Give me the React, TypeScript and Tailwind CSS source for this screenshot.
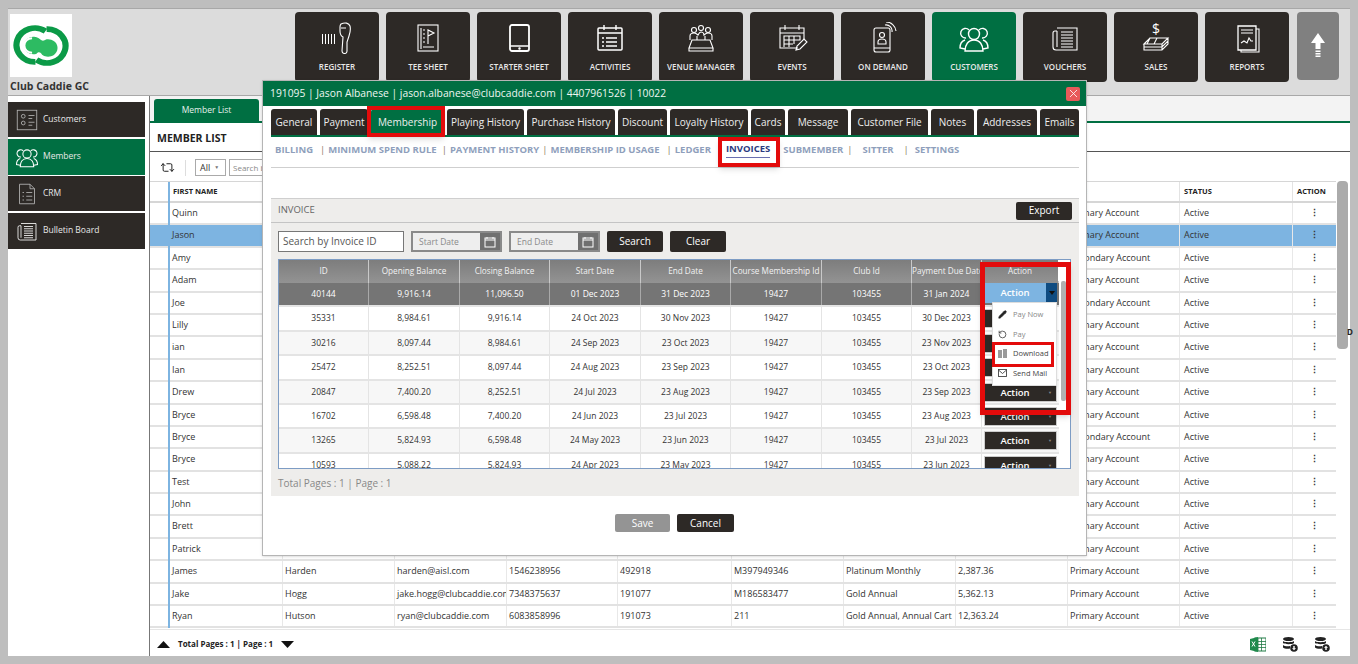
import { Pencil, RotateCcw, Repeat2, X } from 'lucide-react'
import type { ReactNode } from 'react'

const font = "font-['Open_Sans',sans-serif]"

function Ico({ children, size = 32, view = 32, color = 'white' }: { children: ReactNode; size?: number; view?: number; color?: string }) {
  return (
    <svg width={size} height={size} viewBox={`0 0 ${view} ${view}`} fill="none" stroke={color} strokeWidth="1.1">
      {children}
    </svg>
  )
}

const UsersIco = ({ size = 32 }: { size?: number }) => (
  <Ico size={size}>
    <g strokeWidth="1.400">
      <circle cx="16" cy="12" r="5.500" />
      <path d="M11 8a4.800 4.800 0 1 0-3 8M21 8a4.800 4.800 0 1 1 3 8" />
      <path d="M7 18c-3 1-5 4-5 8l5 1M25 18c3 1 5 4 5 8l-5 1M7 29c0-6 3-11 9-11s9 5 9 11z" />
    </g>
  </Ico>
)

const PaperIco = ({ size = 32 }: { size?: number }) => (
  <Ico size={size}>
    <path d="M8 6h20v22H7a3 3 0 0 1-3-3V11a2 2 0 0 1 2-2h2M8 9v16" />
    <path d="M12 10h12M12 13h12M12 16h12M12 19h12M12 22h12M12 25h12" />
  </Ico>
)

const navItems: { label: string; active?: boolean; icon: ReactNode }[] = [
  {
    label: 'REGISTER',
    icon: (
      <Ico>
        <path d="M20 2c4-2 8-1 9 2 1 4 0 7-1 10l-2 6v9a2.500 2.500 0 0 1-5 0l1-14c-2-1-3-3-3-6V5c0-1 0-2 1-3zM20 6h5" />
        <path d="M1.500 12v10M4.500 12v10M7.500 12v10M10.500 12v10M13.500 12v10" strokeWidth="1" />
      </Ico>
    ),
  },
  {
    label: 'TEE SHEET',
    icon: (
      <Ico>
        <rect x="6" y="3" width="20" height="26" />
        <path d="M16 22V8l6 3-6 3M11 8h2M11 12h2M11 16h2M11 20h2M11 25h11M9 6v21" />
      </Ico>
    ),
  },
  {
    label: 'STARTER SHEET',
    icon: (
      <Ico>
        <rect x="7" y="3" width="19" height="26" rx="2" strokeWidth="1.800" />
        <path d="M7 24h19" strokeWidth="1.500" />
        <circle cx="16.500" cy="26.500" r="0.700" fill="white" />
      </Ico>
    ),
  },
  {
    label: 'ACTIVITIES',
    icon: (
      <Ico>
        <rect x="4" y="6" width="24" height="22" rx="1" strokeWidth="1.500" />
        <path d="M4 11h24M10 3v5M22 3v5M12 16h11M12 20h11M12 24h11M8 16h2M8 20h2M8 24h2" strokeWidth="1.400" />
      </Ico>
    ),
  },
  {
    label: 'VENUE MANAGER',
    icon: (
      <Ico>
        <circle cx="9" cy="8" r="2.500" />
        <circle cx="16" cy="6" r="2.500" />
        <circle cx="23" cy="8" r="2.500" />
        <path d="M5 18v-4c0-2 2-3 4-3s3 1 4 2c1-2 2-3 3-3s3 1 3 3c1-1 2-2 4-2s4 1 4 3v4M7 18h18l3 8H4zM4 26v3h24v-3M12 14v4M20 14v4" />
      </Ico>
    ),
  },
  {
    label: 'EVENTS',
    icon: (
      <Ico>
        <path d="M22 26H4V6h24v11M4 11h24M9 3v5M23 3v5" />
        <path d="M8 14h16v4H8zM8 18v7M13 14v11M18 14v8M8 22h9" />
        <path d="M20 28l1-4 7-7 3 3-7 7z" />
      </Ico>
    ),
  },
  {
    label: 'ON DEMAND',
    icon: (
      <Ico>
        <rect x="7" y="6" width="16" height="24" rx="2" />
        <path d="M7 26h16M18 3a6 6 0 0 1 7 7M19 0a10 10 0 0 1 10 9" />
        <circle cx="15" cy="13" r="2.500" />
        <path d="M11 22v-2c0-2 2-3 4-3s4 1 4 3v2z" />
      </Ico>
    ),
  },
  { label: 'CUSTOMERS', active: true, icon: <UsersIco /> },
  { label: 'VOUCHERS', icon: <PaperIco /> },
  {
    label: 'SALES',
    icon: (
      <Ico>
        <path d="M4 22l6-6h18l-6 6zM4 22v3h18l6-6v-3M4 25v3h18l6-6v-3M10 16l-3 6M17 16l-3 6M22 22v6" />
        <text x="16" y="12" fontSize="14" fill="white" stroke="none" textAnchor="middle" fontFamily="Open Sans">$</text>
      </Ico>
    ),
  },
  {
    label: 'REPORTS',
    icon: (
      <Ico>
        <path d="M7 4h18v24H7z" strokeWidth="1.300" />
        <path d="M25 7h3v23H10v-2M10 8h12M10 11h12M10 21l3-2 3 2 2-5 2 3h2" />
      </Ico>
    ),
  },
]

const sideItems: { label: string; active?: boolean; h: string; icon: ReactNode }[] = [
  {
    label: 'Customers',
    h: 'h-[35px]',
    icon: (
      <Ico size={24}>
        <rect x="3" y="3" width="26" height="26" stroke="#b9b9b9" />
        <circle cx="11" cy="11" r="2.500" stroke="#b9b9b9" />
        <circle cx="11" cy="20" r="2.500" stroke="#b9b9b9" />
        <path d="M18 10h8M18 14h5M18 19h8M18 23h5" stroke="#b9b9b9" />
      </Ico>
    ),
  },
  { label: 'Members', active: true, h: 'h-[36px]', icon: <UsersIco size={24} /> },
  {
    label: 'CRM',
    h: 'h-[35px]',
    icon: (
      <Ico size={24}>
        <path d="M6 3h14l6 6v20H6zM20 3v6h6M10 14h2M15 14h8M10 19h2M15 19h8M10 24h2M15 24h8" stroke="#b9b9b9" />
      </Ico>
    ),
  },
  { label: 'Bulletin Board', h: 'h-[36px]', icon: <PaperIco size={24} /> },
]

type Member = { first: string; last?: string; email?: string; phone?: string; id?: string; card?: string; plan?: string; bal?: string; acct: string }

const members: Member[] = [
  { first: 'Quinn', acct: 'Primary Account' },
  { first: 'Jason', acct: 'Primary Account' },
  { first: 'Amy', acct: 'Secondary Account' },
  { first: 'Adam', acct: 'Primary Account' },
  { first: 'Joe', acct: 'Secondary Account' },
  { first: 'Lilly', acct: 'Primary Account' },
  { first: 'ian', acct: 'Primary Account' },
  { first: 'Ian', acct: 'Primary Account' },
  { first: 'Drew', acct: 'Primary Account' },
  { first: 'Bryce', acct: 'Primary Account' },
  { first: 'Bryce', acct: 'Secondary Account' },
  { first: 'Bryce', acct: 'Primary Account' },
  { first: 'Test', acct: 'Primary Account' },
  { first: 'John', acct: 'Primary Account' },
  { first: 'Brett', acct: 'Primary Account' },
  { first: 'Patrick', acct: 'Primary Account' },
  { first: 'James', last: 'Harden', email: 'harden@aisl.com', phone: '1546238956', id: '492918', card: 'M397949346', plan: 'Platinum Monthly', bal: '2,387.36', acct: 'Primary Account' },
  { first: 'Jake', last: 'Hogg', email: 'jake.hogg@clubcaddie.com', phone: '7348375637', id: '191077', card: 'M186583477', plan: 'Gold Annual', bal: '5,362.13', acct: 'Primary Account' },
  { first: 'Ryan', last: 'Hutson', email: 'ryan@clubcaddie.com', phone: '6083858996', id: '191073', card: '211', plan: 'Gold Annual, Annual Cart', bal: '12,363.24', acct: 'Primary Account' },
]

const memberCols = 'grid grid-cols-[20px_112px_112px_112px_111px_114px_112px_112px_112px_112px_113px_44px]'

const modalTabs = [
  { label: 'General', w: 'w-[46px]' },
  { label: 'Payment', w: 'w-[48px]' },
  { label: 'Membership', w: 'w-[73px]', active: true },
  { label: 'Playing History', w: 'w-[77px]' },
  { label: 'Purchase History', w: 'w-[88px]' },
  { label: 'Discount', w: 'w-[49px]' },
  { label: 'Loyalty History', w: 'w-[78px]' },
  { label: 'Cards', w: 'w-[34px]' },
  { label: 'Message', w: 'w-[60px]' },
  { label: 'Customer File', w: 'w-[77px]' },
  { label: 'Notes', w: 'w-[43px]' },
  { label: 'Addresses', w: 'w-[60px]' },
  { label: 'Emails', w: 'w-[39px]' },
]

const invoices = [
  ['40144', '9,916.14', '11,096.50', '01 Dec 2023', '31 Dec 2023', '19427', '103455', '31 Jan 2024'],
  ['35331', '8,984.61', '9,916.14', '24 Oct 2023', '30 Nov 2023', '19427', '103455', '30 Dec 2023'],
  ['30216', '8,097.44', '8,984.61', '24 Sep 2023', '23 Oct 2023', '19427', '103455', '23 Nov 2023'],
  ['25472', '8,252.51', '8,097.44', '24 Aug 2023', '23 Sep 2023', '19427', '103455', '23 Oct 2023'],
  ['20847', '7,400.20', '8,252.51', '24 Jul 2023', '23 Aug 2023', '19427', '103455', '23 Sep 2023'],
  ['16702', '6,598.48', '7,400.20', '24 Jun 2023', '23 Jul 2023', '19427', '103455', '23 Aug 2023'],
  ['13265', '5,824.93', '6,598.48', '24 May 2023', '23 Jun 2023', '19427', '103455', '23 Jul 2023'],
  ['10593', '5,088.22', '5,824.93', '24 Apr 2023', '23 May 2023', '19427', '103455', '23 Jun 2023'],
]

const invoiceHead = ['ID', 'Opening Balance', 'Closing Balance', 'Start Date', 'End Date', 'Course Membership Id', 'Club Id', 'Payment Due Date', 'Action']
const invoiceCols = 'grid grid-cols-[90px_91px_90px_91px_90px_91px_90px_70px_77px]'

function Calendar() {
  return (
    <div className="flex h-full w-[20px] items-center justify-center bg-[#707070]">
      <svg width="12" height="12" viewBox="0 0 12 12" fill="none" stroke="white" strokeWidth="1">
        <rect x="1" y="2" width="10" height="9" />
        <path d="M1 4h10M3 1v2M9 1v2" />
      </svg>
    </div>
  )
}

function DateField({ label }: { label: string }) {
  return (
    <div className="flex h-[21px] w-[91px] border-2 border-[#8a8a8a] bg-[#eeeeee]">
      <span className="flex-1 pl-[6px] text-[8.500px] leading-[17px] text-[#8a8a8a]">{label}</span>
      <Calendar />
    </div>
  )
}

function DbIcon({ up }: { up?: boolean }) {
  return (
    <svg width="16" height="16" viewBox="0 0 16 16" fill="#222">
      <ellipse cx="6.500" cy="3" rx="5.500" ry="2" />
      <path d="M1 5c1 1.600 10 1.600 11 0v2c-1 1.600-10 1.600-11 0zM1 9c1 1.500 6 1.500 7 1v2.500c-2 .5-6 .3-7-1z" />
      <circle cx="12" cy="12" r="3.800" />
      <path d={up ? 'M12 9.800l2 2h-1.300v2.200h-1.400v-2.200H10z' : 'M12 14.200l2-2h-1.300V10h-1.400v2.200H10z'} fill="white" />
    </svg>
  )
}

const Pipe = ({ ml }: { ml: string }) => <span className={`font-normal text-[#8a7a5e] ${ml}`}>|</span>

export default function App() {
  return (
    <div className={`${font} relative flex h-[664px] w-[1358px] flex-col overflow-hidden bg-[#bebebe] pt-2 pr-2 pb-2 pl-2 text-[#333]`}>
      {/* Top bar */}
      <header className="flex h-[88px] shrink-0 border-t border-b border-[#a8a8a8] bg-[#dcdcdc]">
        <div className="w-[287px] shrink-0 pt-[5px] pl-[2px]">
          <div className="flex h-[63px] w-[62px] items-center justify-center bg-white">
            <svg width="58" height="41" viewBox="4 2 52 40" preserveAspectRatio="none" fill="none">
              <path d="M25 38a16.500 16.500 0 1 1 9-30" stroke="#0b9a47" strokeWidth="5.500" />
              <path d="M35 6a16.500 16.500 0 1 1-9 30" stroke="#0b9a47" strokeWidth="5.500" />
              <path d="M26 30a8.500 8.500 0 1 1 2-15c3 3 4 3 7 1a8.500 8.500 0 1 1-4 15c-2-3-3-3-5-1z" fill="#2dbb62" />
              <path d="M22 15c-4 0-7 3-7 7s3 7 7 7" stroke="#fff" strokeWidth="2" />
            </svg>
          </div>
          <div className="mt-[2px] text-[10.500px] font-bold whitespace-nowrap text-[#333]">Club Caddie GC</div>
        </div>
        <nav className="flex gap-[7px] pt-[3px]">
          {navItems.map((n) => (
            <div
              key={n.label}
              className={`flex h-[70px] w-[84px] flex-col items-center rounded-[4px] pt-[10px] ${n.active ? 'bg-[#006f42]' : 'bg-[#2d2926]'}`}
            >
              {n.icon}
              <span className="mt-[7px] text-[8px] font-semibold whitespace-nowrap text-[#e8e8e8]">{n.label}</span>
            </div>
          ))}
          <div className="ml-[1px] flex h-[68px] w-[42px] items-center justify-center rounded-[4px] bg-[#808080]">
            <svg width="14" height="26" viewBox="0 0 14 26" fill="white">
              <path d="M7 0l7 10H9.500v6h-5v-6H0zM4.500 17.500h5v1.500h-5zM4.500 20h5v1.500h-5zM4.500 22.500h5V24h-5z" />
            </svg>
          </div>
        </nav>
      </header>

      <div className="flex min-h-0 flex-1 bg-white">
        {/* Sidebar */}
        <aside className="flex w-[141px] shrink-0 flex-col gap-[1.500px] pt-[6px]">
          {sideItems.map((s) => (
            <div key={s.label} className={`flex w-[137px] items-center pl-[7px] ${s.h} ${s.active ? 'bg-[#006f42]' : 'bg-[#2d2926]'}`}>
              <div className="flex w-[28px] justify-start">{s.icon}</div>
              <span className="text-[8.500px] font-medium text-[#e8e8e8]">{s.label}</span>
            </div>
          ))}
        </aside>

        {/* Main */}
        <main className="flex w-[1201px] flex-col border-l border-[#777]">
          <div className="flex h-[27px] shrink-0 items-end border-b-2 border-[#006f42] bg-[#f3f3f3] pl-[4px]">
            <div className="flex h-[22px] w-[105px] items-center justify-center rounded-t-[3px] bg-[#006f42] text-[8.500px] text-[#e6f2ec]">Member List</div>
          </div>
          <div className="flex h-[29px] shrink-0 items-center border-b border-[#555] pt-[3px] pl-[7px] text-[10.500px] font-bold text-[#222]">MEMBER LIST</div>
          <div className="flex h-[29px] shrink-0 items-center pt-[2px] pl-[10px]">
            <Repeat2 size={15} strokeWidth={1.600} className="text-[#222]" />
            <div className="ml-[10px] h-[16px] w-px bg-[#ddd]" />
            <div className="ml-[9px] flex h-[17px] w-[31px] items-center gap-[4px] border border-[#aaa] pl-[4px] text-[9px]">
              All <span className="text-[5px] text-[#777]">▼</span>
            </div>
            <div className="ml-[3px] h-[17px] w-[60px] border border-[#aaa] pl-[3px] text-[8px] leading-[15px] text-[#888]">Search by</div>
          </div>

          <div className="flex min-h-0 flex-1">
            <div className="w-[1186px] shrink-0 overflow-hidden">
              <div className={`${memberCols} h-[22px] border-t border-b-2 border-[#d6d6d6] text-[7.500px] leading-[18px] font-bold text-[#222]`}>
                <div className="-mb-[2px] border-r-2 border-[#7db4e1]" />
                <div className="pl-[3px]">FIRST NAME</div>
                <div />
                <div />
                <div />
                <div />
                <div />
                <div />
                <div />
                <div className="pl-[2px]">TYPE</div>
                <div className="border-l border-[#e3e3e3] pl-[4px]">STATUS</div>
                <div className="border-l border-[#e3e3e3] pl-[4px]">ACTION</div>
              </div>
              {members.map((m, i) => (
                <div
                  key={i}
                  className={`${memberCols} h-[22.400px] border-b-2 border-[#e2e2e2] text-[9px] leading-[20px] whitespace-nowrap ${i === 1 ? 'bg-[#7db4e1]' : 'bg-white'}`}
                >
                  <div className="-mb-[2px] border-r-2 border-[#7db4e1]" />
                  <div className="pl-[2px]">{m.first}</div>
                  <div className="border-l border-[#e8e8e8] pl-[2px]">{m.last}</div>
                  <div className="overflow-hidden border-l border-[#e8e8e8] pl-[2px]">{m.email}</div>
                  <div className="border-l border-[#e8e8e8] pl-[2px]">{m.phone}</div>
                  <div className="border-l border-[#e8e8e8] pl-[2px]">{m.id}</div>
                  <div className="border-l border-[#e8e8e8] pl-[2px]">{m.card}</div>
                  <div className="overflow-hidden border-l border-[#e8e8e8] pl-[2px]">{m.plan}</div>
                  <div className="border-l border-[#e8e8e8] pl-[2px]">{m.bal}</div>
                  <div className="border-l border-[#e8e8e8] pl-[2px]">{m.acct}</div>
                  <div className="border-l border-[#e8e8e8] pl-[4px]">Active</div>
                  <div className="border-l border-[#e8e8e8] text-center font-bold">⋮</div>
                </div>
              ))}
            </div>
            <div className="w-[15px] shrink-0 pl-[1px]">
              <div className="h-[168px] w-[11px] rounded-[4px] bg-[#ababab]" />
            </div>
          </div>

          <footer className="flex h-[27px] shrink-0 items-center border-t border-[#e6e6e6] pt-[2px] pr-[20px] pl-[7px]">
            <svg width="13" height="7" viewBox="0 0 13 7" fill="#111"><path d="M6.500 0L13 7H0z" /></svg>
            <span className="mr-[8px] ml-[8px] text-[8px] font-bold text-[#222]">Total Pages : 1 | Page : 1</span>
            <svg width="13" height="7" viewBox="0 0 13 7" fill="#111"><path d="M6.500 7L13 0H0z" /></svg>
            <div className="ml-auto flex items-center gap-[16px]">
              <svg width="16" height="15" viewBox="0 0 16 15">
                <rect x="5" y="1" width="11" height="13" fill="#fff" stroke="#1f7a44" />
                <path d="M8 1v13M11.500 1v13M5 4.500h11M5 7.500h11M5 10.500h11" stroke="#1f7a44" strokeWidth="0.800" />
                <path d="M0 2l8-2v15l-8-2z" fill="#1f8a4c" />
                <path d="M2 4.500l3 5M5 4.500l-3 5" stroke="#fff" strokeWidth="1" />
              </svg>
              <DbIcon />
              <DbIcon up />
            </div>
          </footer>
        </main>
      </div>

      <span className="absolute top-[326px] left-[1347px] text-[8px] font-bold text-[#222]">D</span>

      {/* Customer modal */}
      <div className="absolute top-[80px] left-[262px] flex h-[476px] w-[825px] flex-col border border-[#b5b5b5] bg-white shadow-sm">
        <div className="flex h-[25px] shrink-0 items-center justify-between bg-[#006f42] pr-[6px] pl-[7px] text-[10.300px] whitespace-nowrap text-[#eef6f1]">
          <span>191095 | Jason Albanese | jason.albanese@clubcaddie.com | 4407961526 | 10022</span>
          <div className="flex h-[14px] w-[14px] items-center justify-center rounded-[2px] bg-[#e85a5a]">
            <X size={13} strokeWidth={1.500} className="text-white" />
          </div>
        </div>

        <div className="mr-[7px] ml-[8px] flex gap-[3px] border-b-2 border-[#006f42] pt-[3px]">
          {modalTabs.map((t) => (
            <div
              key={t.label}
              className={`flex h-[26px] shrink-0 items-center justify-center rounded-t-[3px] text-[10px] whitespace-nowrap text-[#eeeeee] ${t.w} ${t.active ? 'bg-[#006f42]' : 'bg-[#2d2926]'}`}
            >
              {t.label}
            </div>
          ))}
        </div>

        <div className="mr-[7px] ml-[8px] flex h-[31px] shrink-0 items-center border-b border-[#cfcfcf] pb-[4px] pl-[4px] text-[9.500px] font-bold whitespace-nowrap text-[#8f9fbc]">
          <span>BILLING</span>
          <Pipe ml="ml-[7px]" />
          <span className="ml-[3px]">MINIMUM SPEND RULE</span>
          <Pipe ml="ml-[5px]" />
          <span className="ml-[3px]">PAYMENT HISTORY</span>
          <Pipe ml="ml-[3px]" />
          <span className="ml-[3px]">MEMBERSHIP ID USAGE</span>
          <Pipe ml="ml-[7px]" />
          <span className="ml-[3px]">LEDGER</span>
          <span className="ml-[15px] border-b border-[#6a6fb0] text-[#2b3a80]">INVOICES</span>
          <span className="ml-[13px]">SUBMEMBER</span>
          <Pipe ml="ml-[4px]" />
          <span className="ml-[10px]">SITTER</span>
          <Pipe ml="ml-[10px]" />
          <span className="ml-[6px]">SETTINGS</span>
        </div>

        <div className="mr-[7px] ml-[8px] h-[31px] shrink-0 border-b border-[#cfcfcf]" />

        {/* Invoice panel */}
        <div className="mr-[7px] ml-[8px] flex h-[297px] shrink-0 flex-col bg-[#eeedeb]">
          <div className="flex h-[24px] shrink-0 items-center justify-between border-b border-[#c4c4c4] pr-[7px] pl-[7px] text-[9.500px] text-[#666]">
            <span>INVOICE</span>
            <button className="h-[18px] w-[56px] rounded-[2px] bg-[#2d2926] text-[10px] text-white">Export</button>
          </div>
          <div className="mt-[8px] flex h-[21px] shrink-0 items-center gap-[7px] pl-[7px]">
            <div className="h-[21px] w-[126px] border border-[#777] bg-white pl-[4px] text-[10px] leading-[19px] text-[#555]">Search by Invoice ID</div>
            <DateField label="Start Date" />
            <DateField label="End Date" />
            <button className="h-[21px] w-[56px] rounded-[2px] bg-[#2d2926] text-[10px] text-white">Search</button>
            <button className="h-[21px] w-[56px] rounded-[2px] bg-[#2d2926] text-[10px] text-white">Clear</button>
          </div>

          <div className="relative mt-[7px] mr-[8px] ml-[7px] h-[210px] shrink-0 overflow-hidden border border-[#7d9cc4] bg-white">
            <div className={`${invoiceCols} h-[23px] w-[780px] bg-gradient-to-b from-[#7d7d7d] to-[#939393] text-[8.200px] leading-[22px] whitespace-nowrap text-[#f2f2f2]`}>
              {invoiceHead.map((h) => (
                <div key={h} className="border-r border-[#c9c9c9] text-center">{h}</div>
              ))}
            </div>
            {invoices.map((r, i) => (
              <div
                key={r[0]}
                className={`${invoiceCols} h-[24.400px] w-[780px] border-b-2 border-[#e4e4e4] text-[8.500px] leading-[22px] ${i === 0 ? 'bg-[#757575] text-white' : i % 2 === 0 ? 'bg-[#f7f7f7] text-[#333]' : 'bg-white text-[#333]'}`}
              >
                {r.map((c, j) => (
                  <div key={j} className={`text-center ${i === 0 ? 'border-r border-[#a9a9a9]' : 'border-r border-[#e4e4e4]'}`}>{c}</div>
                ))}
                <div className="pl-[2px]">
                  {i === 0 ? (
                    <div className="flex h-[20px] w-[73px]">
                      <span className="flex-1 bg-[#7db4e1] text-center text-[9.500px] leading-[19px] font-semibold text-white">Action</span>
                      <span className="flex w-[11px] items-center justify-center bg-[#0f4c81]">
                        <svg width="6" height="4" viewBox="0 0 6 4" fill="#111"><path d="M0 0h6L3 4z" /></svg>
                      </span>
                    </div>
                  ) : (
                    <div className="relative mt-[2px] h-[19px] w-[73px] border border-[#ccc] bg-[#2d2926] pr-[11px] text-center text-[9.500px] leading-[17px] font-semibold text-white">
                      Action
                      <span className="absolute top-0 right-[4px] text-[4px] text-[#888]">▼</span>
                    </div>
                  )}
                </div>
              </div>
            ))}
            <div className="absolute top-[21px] right-[4px] h-[120px] w-[5px] rounded-[2px] bg-[#b0b0b0]" />
            <div className="absolute top-0 right-0 h-[21px] w-[12px] bg-white" />
          </div>

          <div className="mt-[7px] pl-[7px] text-[10px] text-[#888]">Total Pages : 1 | Page : 1</div>
        </div>

        <div className="mt-[18px] flex justify-center gap-[7px]">
          <button className="h-[18px] w-[55px] rounded-[2px] bg-[#949494] text-[10px] text-white">Save</button>
          <button className="h-[18px] w-[57px] rounded-[2px] bg-[#2d2926] text-[10px] text-white">Cancel</button>
        </div>
      </div>

      {/* Action menu */}
      <div className="absolute top-[302px] left-[992px] flex h-[84px] w-[65px] flex-col justify-around border border-[#ddd] bg-white py-[2px] text-[7.500px] shadow-sm">
        <div className="flex items-center gap-[6px] pl-[5px] text-[#888]">
          <Pencil size={9} fill="#222" className="text-[#222]" /> Pay Now
        </div>
        <div className="flex items-center gap-[6px] pl-[5px] text-[#888]">
          <RotateCcw size={9} className="text-[#333]" /> Pay
        </div>
        <div className="flex items-center gap-[6px] pl-[5px] text-[#444]">
          <svg width="9" height="9" viewBox="0 0 9 9" fill="#9a9a9a"><path d="M0 1h4v8H0zM5 0h4v9H5z" /></svg> Download
        </div>
        <div className="flex items-center gap-[6px] pl-[5px] text-[#444]">
          <svg width="9" height="8" viewBox="0 0 9 8" fill="none" stroke="#444" strokeWidth="0.900"><rect x="0.500" y="0.500" width="8" height="7" /><path d="M0.500 1l4 3.500 4-3.500" /></svg> Send Mail
        </div>
      </div>

      {/* Red callouts */}
      <div className="absolute top-[106px] left-[367px] h-[31px] w-[78px] border-4 border-[#e30b0b] shadow-md" />
      <div className="absolute top-[137px] left-[718px] h-[30px] w-[62px] border-4 border-[#e30b0b] shadow-md" />
      <div className="absolute top-[262px] left-[980px] h-[153px] w-[91px] border-[5px] border-[#e30b0b] shadow-md" />
      <div className="absolute top-[342px] left-[992px] h-[25px] w-[62px] border-[3px] border-[#e30b0b]" />
    </div>
  )
}
